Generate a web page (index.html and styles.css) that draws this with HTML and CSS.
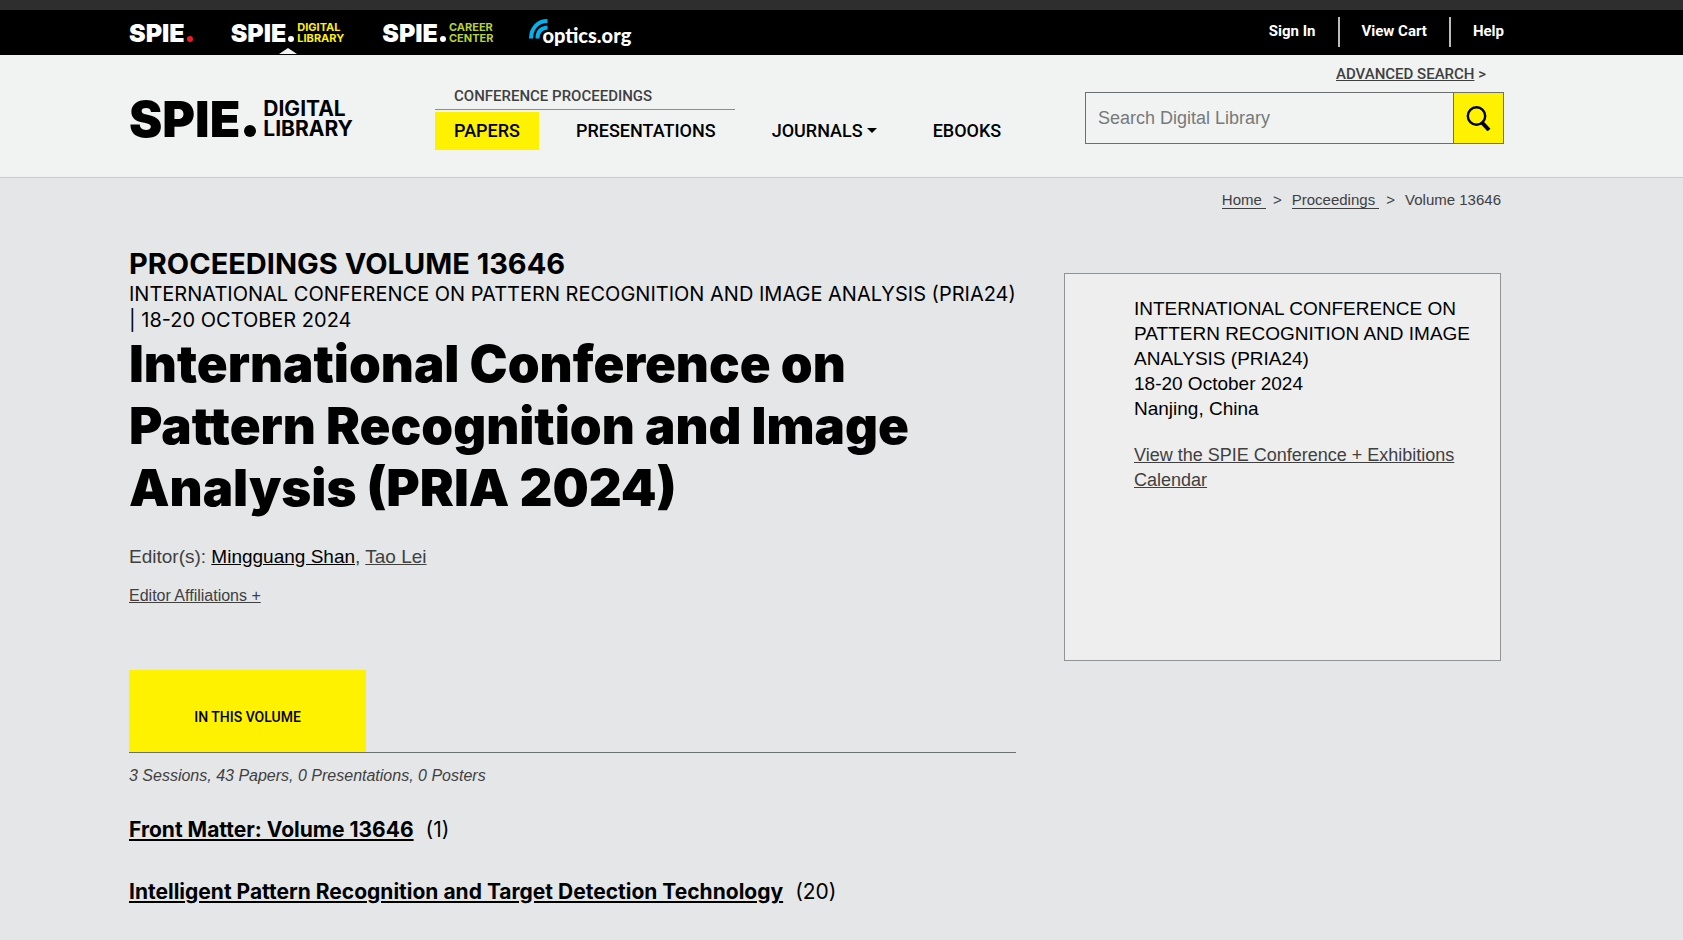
FILE: index.html
```html
<!DOCTYPE html>
<html lang="en">
<head>
<meta charset="utf-8">
<title>Proceedings Volume 13646 | SPIE Digital Library</title>
<link rel="stylesheet" href="styles.css">
</head>
<body>
<div class="strip"></div>
<div class="topbar">
  <nav class="sites" aria-label="SPIE sites">
    <a class="brand" href="#">SPIE<i class="dot dot-red"></i></a>
    <a class="brand brand-current" href="#">SPIE<i class="dot"></i><span class="sub sub-yellow">DIGITAL<br>LIBRARY</span></a>
    <a class="brand" href="#">SPIE<i class="dot"></i><span class="sub sub-green">CAREER<br>CENTER</span></a>
    <a class="optics" href="#"><svg class="waves" width="20" height="20" viewBox="0 0 20 20" fill="none" stroke="#00b2f0" stroke-width="4"><path d="M2 19.500C2 9 9 2 18.500 2"/><path d="M8.500 19.500C8.500 13 12 9 18.500 8.500"/></svg><span>optics.org</span></a>
  </nav>
  <nav class="account" aria-label="Account">
    <a href="#">Sign In</a><a href="#">View Cart</a><a href="#">Help</a>
  </nav>
</div>
<header class="header">
  <a class="logo" href="#">SPIE<i class="dot"></i><span class="logo-sub">DIGITAL<br>LIBRARY</span></a>
  <nav class="nav" aria-label="Main">
    <div class="nav-label">CONFERENCE PROCEEDINGS</div>
    <div class="nav-row">
      <a class="current" href="#">PAPERS</a>
      <a href="#">PRESENTATIONS</a>
      <a href="#">JOURNALS<i class="caret"></i></a>
      <a href="#">EBOOKS</a>
    </div>
  </nav>
  <form class="search">
    <div class="advanced"><a href="#">ADVANCED SEARCH</a> &gt;</div>
    <div class="searchbox">
      <input type="text" placeholder="Search Digital Library" aria-label="Search Digital Library">
      <button type="button" aria-label="Search"><svg width="26" height="26" viewBox="0 0 26 26" fill="none" stroke="#000"><circle cx="10.500" cy="11" r="8.700" stroke-width="2.400"/><path d="M15.500 17L23 25" stroke-width="4"/></svg></button>
    </div>
  </form>
</header>
<div class="page">
  <nav class="crumbs" aria-label="Breadcrumb"><a href="#">Home&nbsp;</a><span>&gt;</span><a href="#">Proceedings&nbsp;</a><span>&gt;</span>Volume 13646</nav>
  <div class="columns">
    <main class="main">
      <h2 class="volume">PROCEEDINGS VOLUME 13646</h2>
      <div class="event">INTERNATIONAL CONFERENCE ON PATTERN RECOGNITION AND IMAGE ANALYSIS (PRIA24)<br>| 18-20 OCTOBER 2024</div>
      <h1 class="title">International Conference on<br>Pattern Recognition and Image<br>Analysis (PRIA 2024)</h1>
      <div class="editors">Editor(s): <a class="strong" href="#">Mingguang Shan</a>, <a href="#">Tao Lei</a></div>
      <div class="affil"><a href="#">Editor Affiliations +</a></div>
      <div class="tabs"><button class="tab" type="button">IN THIS VOLUME</button></div>
      <div class="stats">3 Sessions, 43 Papers, 0 Presentations, 0 Posters</div>
      <div class="session"><a href="#">Front Matter: Volume 13646</a><span>(1)</span></div>
      <div class="session"><a href="#">Intelligent Pattern Recognition and Target Detection Technology</a><span>(20)</span></div>
    </main>
    <aside class="side">
      <p class="where">INTERNATIONAL CONFERENCE ON PATTERN RECOGNITION AND IMAGE ANALYSIS (PRIA24)<br>18-20 October 2024<br>Nanjing, China</p>
      <p><a href="#">View the SPIE Conference + Exhibitions Calendar</a></p>
    </aside>
  </div>
</div>
</body>
</html>
```
FILE: styles.css
```css
* { box-sizing: border-box; }
body {
  margin: 0;
  min-height: 100vh;
  background: #e4e6e8;
  color: #404041;
  font-family: "Liberation Sans", Arial, sans-serif;
  font-size: 18px;
}
a { color: inherit; }
p, h1, h2 { margin: 0; }

.strip { height: 10px; background: #2e2e2e; }

.topbar {
  display: flex;
  justify-content: space-between;
  height: 45px;
  padding: 0 179px 0 129px;
  background: #000;
  color: #fff;
}
.topbar a { text-decoration: none; }
.sites { display: flex; align-items: center; gap: 38px; }
.brand {
  position: relative;
  display: flex;
  align-items: center;
  height: 45px;
  font: 900 25px/28px Inter, sans-serif;
}
.brand-current::after {
  content: "";
  position: absolute;
  left: 48px;
  bottom: 1px;
  border: 9px solid transparent;
  border-top: 0;
  border-bottom: 6px solid #f0f3f2;
}
.dot {
  width: 6px;
  height: 6px;
  margin: 12px 0 0 2px;
  border-radius: 50%;
  background: currentColor;
}
.dot-red { background: #ee1c25; }
.sub { margin-left: 3px; font: 700 11px/11px Inter, sans-serif; }
.sub-yellow { color: #fff200; }
.sub-green { color: #b5d334; }
.optics { display: flex; align-items: center; font: 900 20px/24px Lato, sans-serif; }
.waves { margin: 0 -7px 8px -2px; }
.optics span { padding-top: 5px; }

.account { display: flex; align-items: flex-start; padding-top: 7px; }
.account a {
  height: 30px;
  padding: 0 22px;
  border-left: 2px solid #bbb;
  font: 700 15px/28px Roboto, sans-serif;
}
.account a:first-child { border-left: 0; }
.account a:last-child { padding-right: 0; }

.header {
  display: flex;
  align-items: flex-start;
  height: 123px;
  padding: 0 179px 0 129px;
  background: #f0f3f2;
  border-bottom: 1px solid #c8cacc;
}
.logo {
  display: flex;
  align-items: center;
  width: 306px;
  margin-top: 39px;
  color: #000;
  text-decoration: none;
  font: 900 50px/50px Inter, sans-serif;
}
.logo .dot { width: 12px; height: 12px; margin: 24px 0 0 4px; }
.logo-sub { margin-left: 7px; font: 700 21px/20px Inter, sans-serif; }
.nav { padding-top: 31px; font-family: Roboto, sans-serif; font-weight: 500; }
.nav-label {
  width: 300px;
  padding: 0 0 3px 19px;
  border-bottom: 1px solid #8c8f91;
  font-size: 15px;
  line-height: 20px;
}
.nav-row { display: flex; gap: 18px; padding-top: 2px; }
.nav-row a {
  display: flex;
  align-items: center;
  height: 38px;
  padding: 0 19px 2px;
  color: #000;
  font-size: 18px;
  text-decoration: none;
}
.nav-row .current { background: #fff200; }
.caret { margin-left: 4px; border: 5px solid transparent; border-top-color: #000; border-bottom: 0; }

.search { width: 419px; margin-left: auto; padding-top: 8px; }
.advanced {
  padding-right: 18px;
  text-align: right;
  font: 500 15px/22px Roboto, sans-serif;
}
.searchbox {
  display: flex;
  height: 52px;
  margin-top: 7px;
  border: 1px solid #6c6f70;
}
.searchbox input {
  flex: 1;
  min-width: 0;
  padding: 0 12px;
  border: 0;
  background: transparent;
  font: 18px "Liberation Sans", Arial, sans-serif;
}
.searchbox input::placeholder { color: #77797a; }
.searchbox button {
  display: grid;
  place-items: center;
  width: 50px;
  padding: 0;
  border: 0;
  border-left: 1px solid #6c6f70;
  background: #fff200;
}

.page { padding: 13px 182px 0 129px; }
.crumbs {
  display: flex;
  justify-content: flex-end;
  font-size: 15px;
  line-height: 17px;
}
.crumbs span { margin: 0 10px 0 7px; }
.crumbs a { border-bottom: 1px solid #404041; text-decoration: none; }
.columns { display: flex; align-items: flex-start; justify-content: space-between; }
.main { width: 887px; padding-top: 38px; }
.volume { color: #000; font: 700 29px/34px Inter, sans-serif; }
.event { color: #000; white-space: nowrap; font: 400 20px/26px Inter, sans-serif; }
.title { color: #000; white-space: nowrap; font: 900 51px/62px Inter, sans-serif; }
.editors { padding-top: 25px; font-size: 19px; line-height: 26px; }
.editors .strong { color: #000; }
.affil { padding-top: 14px; font-size: 16px; line-height: 24px; }
.tabs { margin-top: 62px; border-bottom: 1px solid #6c6f70; }
.tab {
  display: block;
  width: 237px;
  height: 82px;
  padding: 12px 0 0;
  border: 0;
  background: #fff200;
  color: #000;
  font: 500 14px/20px Roboto, sans-serif;
}
.stats { padding: 11px 0 29px; font-size: 16px; font-style: italic; line-height: 24px; }
.session {
  display: flex;
  gap: 12px;
  padding-bottom: 36px;
  color: #000;
  white-space: nowrap;
  font: 400 21px/26px Inter, sans-serif;
}
.session a { font-weight: 700; }
.side {
  width: 437px;
  height: 388px;
  margin-top: 64px;
  padding: 22px 28px 22px 69px;
  border: 1px solid #919395;
  background: #eee;
  line-height: 25px;
}
.side p { margin-bottom: 22px; }
.side .where { color: #000; font-size: 19px; }
```
